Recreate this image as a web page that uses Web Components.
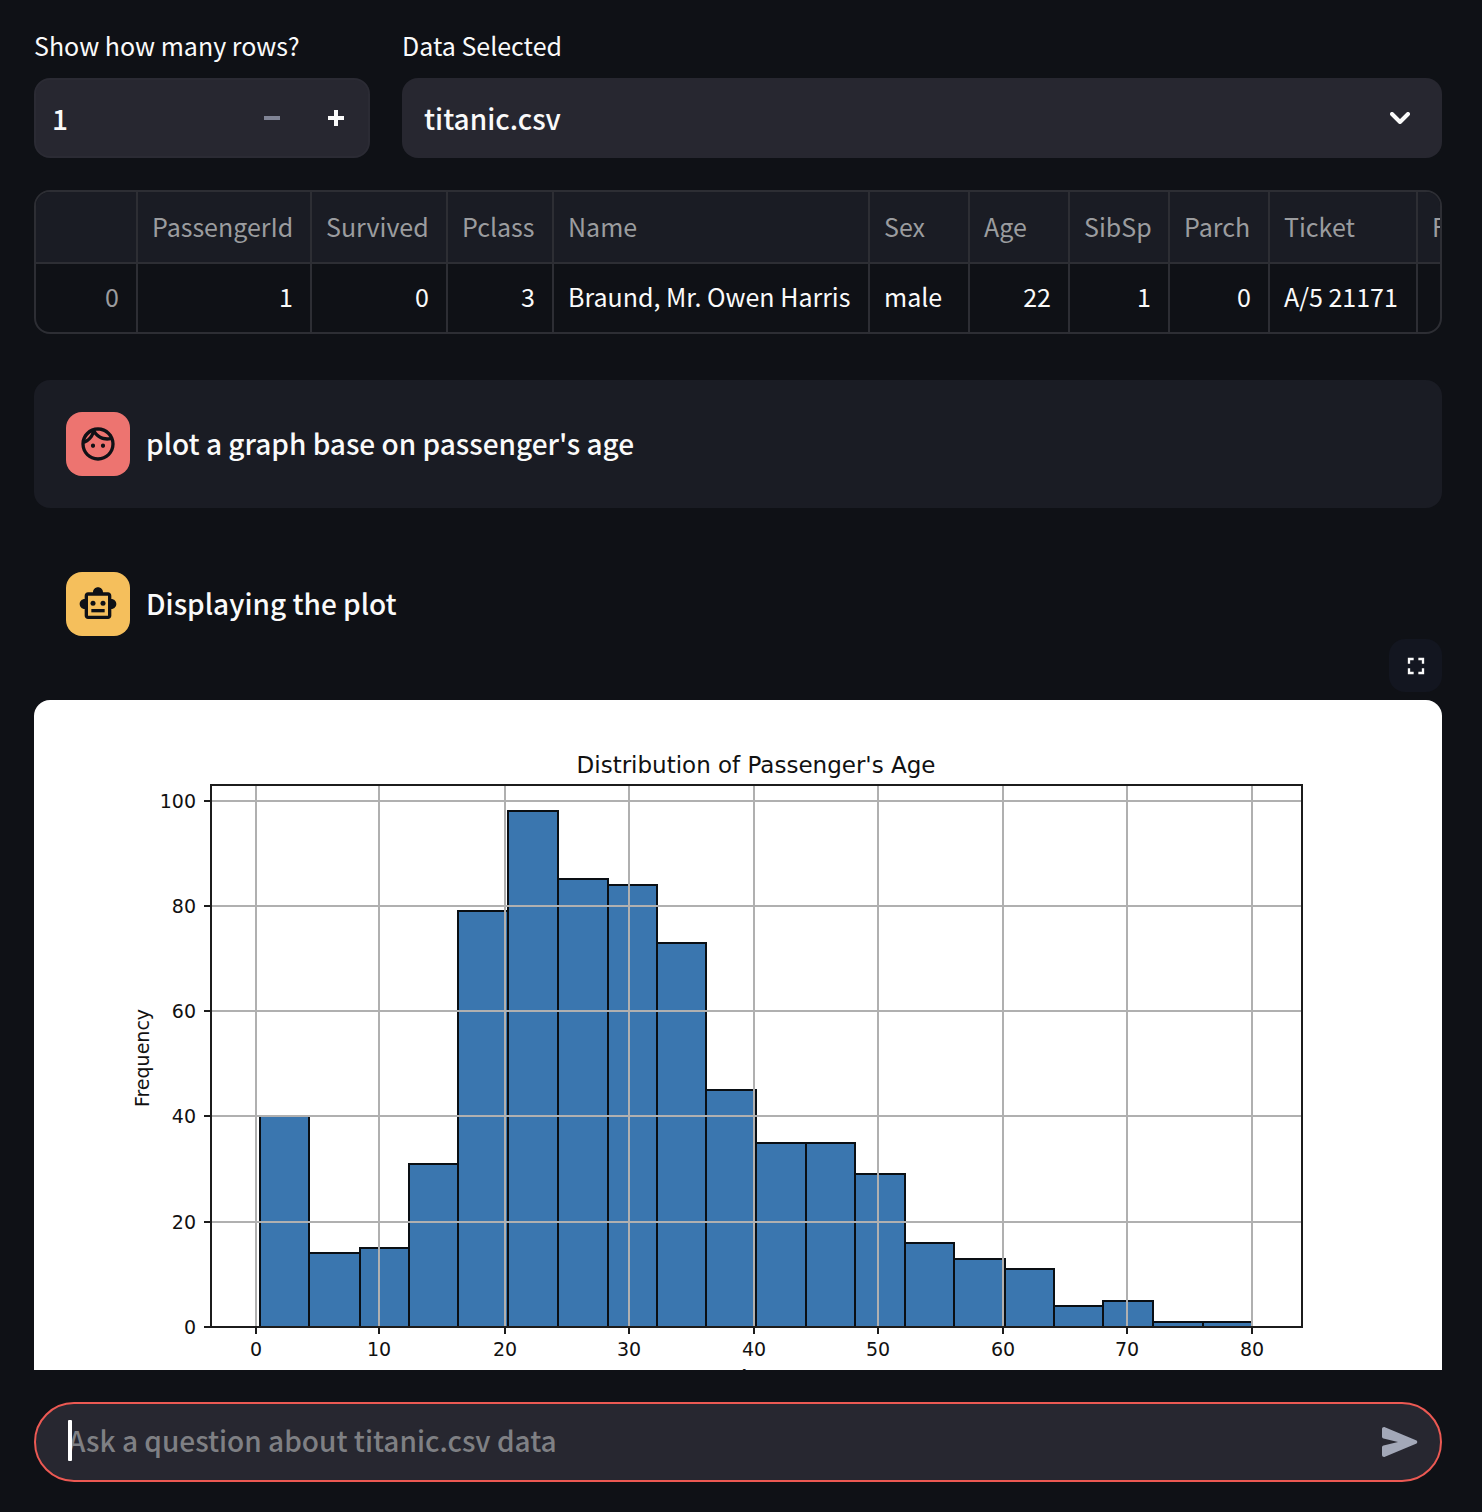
<!DOCTYPE html>
<html lang="en">
<head>
<meta charset="utf-8">
<meta name="viewport" content="width=device-width, initial-scale=1">
<title>Data chat</title>
<style>
  html, body { margin: 0; height: 100%; }
  body {
    --bg: #0f1116;
    --field: #272730;
    --panel: #1a1c24;
    --line: #2d2e34;
    --muted: #9b9c9f;
    --accent: #ec5953;
    background: var(--bg);
    color: #fafafa;
    font-family: "Noto Sans CJK SC", "Noto Sans", sans-serif;
    font-size: 28px;
    font-weight: 500;
  }
</style>
</head>
<body>
<data-app>
  <control-row>
    <number-field label="Show how many rows?" value="1"></number-field>
    <select-field label="Data Selected" value="titanic.csv"></select-field>
  </control-row>
  <data-grid></data-grid>
  <chat-message kind="user">plot a graph base on passenger's age</chat-message>
  <chat-message kind="assistant">Displaying the plot</chat-message>
  <plot-figure><age-histogram></age-histogram></plot-figure>
  <chat-input slot="footer" placeholder="Ask a question about titanic.csv data"></chat-input>
</data-app>

<script>
class Base extends HTMLElement {
  connectedCallback() {
    if (this.shadowRoot) return;
    this.attachShadow({ mode: "open" }).innerHTML =
      `<style>*{box-sizing:border-box} button,input,select{font:inherit;color:inherit;background:none;border:0;margin:0;padding:0;outline:0} svg{display:block}</style>` + this.render();
  }
}

customElements.define("data-app", class extends Base {
  render() {
    return `<style>
      :host { display: flex; flex-direction: column; height: 100vh; min-height: 900px; box-sizing: border-box; padding: 32px 40px 30px 34px; }
      main { flex: 1; min-height: 0; overflow: hidden; display: flex; flex-direction: column; gap: 32px; }
      footer { padding-top: 32px; }
    </style>
    <main><slot></slot></main><footer><slot name="footer"></slot></footer>`;
  }
});

customElements.define("control-row", class extends Base {
  render() {
    return `<style>:host { display: grid; grid-template-columns: 21fr 65fr; gap: 32px; }</style><slot></slot>`;
  }
});

customElements.define("number-field", class extends Base {
  render() {
    return `<style>
      :host { display: flex; flex-direction: column; gap: 20px; min-width: 0; }
      label { font-size: 25px; font-weight: 400; line-height: 26px; white-space: nowrap; }
      .box { display: flex; height: 80px; background: var(--field); border: 2px solid #2b2b34; border-radius: 16px; overflow: hidden; }
      input { flex: 1; min-width: 0; padding: 0 0 0 16px; appearance: textfield; }
      input::-webkit-inner-spin-button { appearance: none; margin: 0; }
      button { width: 64px; display: grid; place-items: center; }
      button:disabled { color: #808495; }
    </style>
    <label for="n">${this.getAttribute("label")}</label>
    <div class="box">
      <input id="n" type="number" min="1" value="${this.getAttribute("value")}">
      <button disabled aria-label="Decrease"><svg width="16" height="16" fill="currentColor"><path d="M0 6h16v4H0z"/></svg></button>
      <button aria-label="Increase"><svg width="16" height="16" fill="currentColor"><path d="M6 0h4v6h6v4h-6v6H6v-6H0V6h6z"/></svg></button>
    </div>`;
  }
});

customElements.define("select-field", class extends Base {
  render() {
    return `<style>
      :host { display: flex; flex-direction: column; gap: 20px; min-width: 0; }
      label { font-size: 25px; font-weight: 400; line-height: 26px; }
      .box { display: grid; align-items: center; height: 80px; background: var(--field); border-radius: 16px; }
      .box > * { grid-area: 1 / 1; }
      select { appearance: none; width: 100%; height: 100%; padding: 0 22px; }
      option { background: #272730; }
      svg { justify-self: end; margin-right: 32px; pointer-events: none; }
    </style>
    <label for="s">${this.getAttribute("label")}</label>
    <div class="box">
      <select id="s"><option>${this.getAttribute("value")}</option></select>
      <svg width="20" height="12" fill="none" stroke="currentColor" stroke-width="4" stroke-linecap="round" stroke-linejoin="round"><path d="M2 2l8 8 8-8"/></svg>
    </div>`;
  }
});

customElements.define("data-grid", class extends Base {
  render() {
    const cols = [["", "0", 102, 1], ["PassengerId", "1", 174, 1], ["Survived", "0", 136, 1], ["Pclass", "3", 106, 1],
      ["Name", "Braund, Mr. Owen Harris", 316], ["Sex", "male", 100], ["Age", "22", 100, 1], ["SibSp", "1", 100, 1],
      ["Parch", "0", 100, 1], ["Ticket", "A/5 21171", 148], ["Fare", "", 100, 1]];
    return `<style>
      :host { display: block; flex: none; margin-bottom: 14px; border: 2px solid var(--line); border-radius: 16px; overflow: hidden; }
      table { table-layout: fixed; width: 1482px; border-collapse: separate; border-spacing: 0; font-size: 25px; line-height: 32px; white-space: nowrap; }
      th, td { text-align: left; font-weight: 400; padding: 0 14px 4px; border-right: 2px solid var(--line); }
      thead th { height: 72px; padding-bottom: 2px; background: var(--panel); color: var(--muted); border-bottom: 2px solid var(--line); }
      tbody > tr > * { height: 68px; }
      .num { text-align: right; padding-right: 17px; }
      tbody th { color: var(--muted); }
    </style>
    <table>
      <colgroup>${cols.map(c => `<col style="width:${c[2]}px">`).join("")}</colgroup>
      <thead><tr>${cols.map(c => `<th scope="col">${c[0]}</th>`).join("")}</tr></thead>
      <tbody><tr>${cols.map((c, i) => i ? `<td class="${c[3] ? "num" : ""}">${c[1]}</td>` : `<th scope="row" class="num">${c[1]}</th>`).join("")}</tr></tbody>
    </table>`;
  }
});

const AVATARS = {
  user: `<path d="M10.25 13c0 .69-.56 1.25-1.25 1.25S7.75 13.69 7.75 13s.56-1.25 1.25-1.25 1.25.56 1.25 1.25zM15 11.75c-.69 0-1.25.56-1.25 1.25s.56 1.25 1.25 1.25 1.25-.56 1.25-1.25-.56-1.25-1.25-1.25zm7 .25c0 5.52-4.48 10-10 10S2 17.52 2 12 6.48 2 12 2s10 4.48 10 10zM10.66 4.12C12.06 6.44 14.6 8 17.5 8c.46 0 .91-.05 1.34-.12C17.44 5.56 14.9 4 12 4c-.46 0-.91.05-1.34.12zM4.42 9.47c1.71-.97 3.03-2.55 3.66-4.44C6.37 6 5.05 7.58 4.42 9.47zM20 12c0-.78-.12-1.53-.33-2.24-.7.15-1.42.24-2.17.24-3.13 0-5.92-1.44-7.76-3.69C8.69 8.87 6.6 10.88 4 11.86c.01.04 0 .09 0 .14 0 4.42 3.58 8 8 8s8-3.58 8-8z"/>`,
  assistant: `<path d="M20 9V7c0-1.1-.9-2-2-2h-3c0-1.66-1.34-3-3-3S9 3.34 9 5H6c-1.1 0-2 .9-2 2v2c-1.66 0-3 1.34-3 3s1.34 3 3 3v4c0 1.1.9 2 2 2h12c1.1 0 2-.9 2-2v-4c1.66 0 3-1.34 3-3s-1.34-3-3-3zm-2 10H6V7h12v12z"/><circle cx="9" cy="11.5" r="1.5"/><circle cx="15" cy="11.5" r="1.5"/><path d="M8 15h8v2H8z"/>`
};
customElements.define("chat-message", class extends Base {
  render() {
    return `<style>
      :host { display: flex; flex: none; align-items: center; gap: 16px; padding: 32px; border-radius: 16px; }
      :host([kind=user]) { background: var(--panel); }
      .avatar { display: grid; place-items: center; width: 64px; height: 64px; border-radius: 16px; background: #f5bf5c; color: #0f1116; }
      :host([kind=user]) .avatar { background: #ed7470; }
      p { margin: 0; padding-bottom: 2px; line-height: 48px; }
    </style>
    <div class="avatar"><svg width="40" height="40" viewBox="0 0 24 24" fill="currentColor">${AVATARS[this.getAttribute("kind")]}</svg></div>
    <p><slot></slot></p>`;
  }
});

customElements.define("plot-figure", class extends Base {
  render() {
    return `<style>
      :host { display: block; flex: none; position: relative; }
      figure { margin: 0; border-radius: 16px; overflow: hidden; background: #fff; }
      button { position: absolute; right: 0; bottom: calc(100% + 8px); width: 53px; height: 53px; border-radius: 16px; background: #131620; display: grid; place-items: center; }
    </style>
    <figure><slot></slot></figure>
    <button aria-label="View fullscreen"><svg width="28" height="28" viewBox="0 0 24 24" fill="currentColor"><path d="M7 14H5v5h5v-2H7v-3zm-2-4h2V7h3V5H5v5zm12 7h-3v2h5v-5h-2v3zM14 5v2h3v3h2V5h-5z"/></svg></button>`;
  }
});

customElements.define("age-histogram", class extends Base {
  render() {
    const counts = [40, 14, 15, 31, 79, 98, 85, 84, 73, 45, 35, 35, 29, 16, 13, 11, 4, 5, 1, 1];
    const edges = [226, 275, 326, 375, 424, 474, 524, 574, 623, 672, 722, 772, 821, 871, 920, 971, 1020, 1069, 1119, 1169, 1218];
    const xt = [222, 345, 471, 595, 720, 844, 969, 1093, 1218];
    const y = v => Math.round(627 - v * 5.265);
    const yt = [0, 20, 40, 60, 80, 100];
    return `<style>
      :host { display: block; }
      svg { width: 100%; height: auto; font-family: "DejaVu Sans", sans-serif; font-size: 19px; font-weight: 400; fill: #111; }
      .title { font-size: 23px; }
      .grid { stroke: #b0b0b0; stroke-width: 2; fill: none; }
      .bars { fill: #3a76af; stroke: #0a0f14; stroke-width: 2; }
      .axes { stroke: #1c1c1c; stroke-width: 2; fill: none; }
      .x, .title { text-anchor: middle; } .y { text-anchor: end; }
    </style>
    <svg viewBox="0 0 1408 845" role="img" aria-label="Histogram of passenger age">
      <text class="title" x="722" y="73">Distribution of Passenger's Age</text>
      <g class="bars">${counts.map((c, i) => `<rect x="${edges[i]}" y="${y(c)}" width="${edges[i + 1] - edges[i]}" height="${627 - y(c)}"/>`).join("")}</g>
      <path class="grid" d="${xt.map(x => `M${x} 85V627`).join("")}${yt.map(v => `M177 ${y(v)}H1268`).join("")}"/>
      <path class="axes" d="M177 85H1268V627H177z${xt.map(x => `M${x} 627v7`).join("")}${yt.map(v => `M177 ${y(v)}h-7`).join("")}"/>
      <g class="x">${xt.map((x, i) => `<text x="${x}" y="656">${i * 10}</text>`).join("")}<text x="722" y="683">Age</text></g>
      <g class="y">${yt.map(v => `<text x="162" y="${y(v) + 7}">${v}</text>`).join("")}</g>
      <text class="x" transform="translate(115 358) rotate(-90)">Frequency</text>
    </svg>`;
  }
});

customElements.define("chat-input", class extends Base {
  render() {
    return `<style>
      :host { display: flex; align-items: center; position: relative; box-sizing: border-box; height: 80px; padding: 0 22px 0 32px; background: var(--field); border: 2px solid var(--accent); border-radius: 40px; }
      input { flex: 1; min-width: 0; height: 100%; padding-bottom: 4px; }
      input::placeholder { color: #7f8084; opacity: 1; }
      button { display: grid; place-items: center; color: #a3a8b8; }
      i { position: absolute; left: 32px; top: 16px; width: 4px; height: 41px; border-radius: 1px; background: #fff; }
    </style>
    <input type="text" aria-label="Chat message" placeholder="${this.getAttribute("placeholder")}"><i></i>
    <button aria-label="Send"><svg width="36" height="30" viewBox="0 0 36 30" fill="currentColor"><path d="M0 2C0 .6 1.500-.4 2.900.2L34 13.200c1.700.7 1.700 2.900 0 3.600L2.900 29.800C1.500 30.400 0 29.400 0 28v-7.500c0-.9.600-1.700 1.500-1.900L16 15 1.500 11.400C.6 11.200 0 10.400 0 9.500z"/></svg></button>`;
  }
});
</script>
</body>
</html>
